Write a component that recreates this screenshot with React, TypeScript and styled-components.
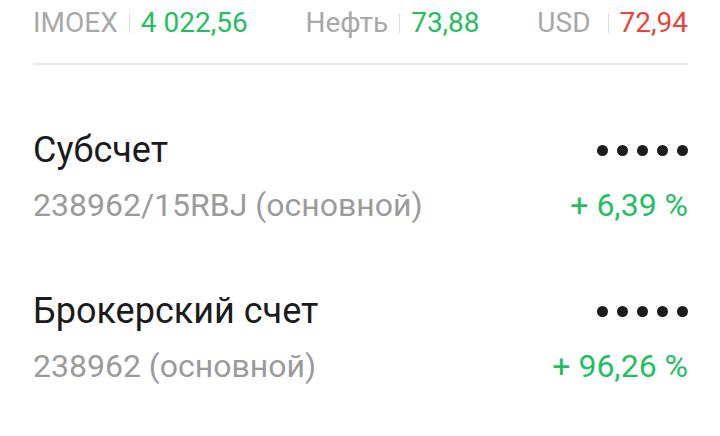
import React from "react";
import styled, { createGlobalStyle } from "styled-components";

const Global = createGlobalStyle`
  html, body { margin: 0; padding: 0; background: #ffffff; }
  body { font-family: Roboto, "Noto Sans", Arial, sans-serif; }
`;

const Page = styled.div`
  width: 720px;
  height: 436px;
  box-sizing: border-box;
  padding: 0 32px 0 33px;
  background: #fff;
  overflow: hidden;
`;

const Ticker = styled.div`
  display: flex;
  justify-content: space-between;
  align-items: baseline;
  height: 65px;
  box-sizing: border-box;
  padding-top: 5px;
  border-bottom: 2px solid #e8e8e8;
  font-size: 28px;
  line-height: 36px;
`;

const Quote = styled.div`
  display: flex;
  align-items: baseline;
  white-space: nowrap;
`;

const Label = styled.span`
  color: #a8a8a8;
`;

const Sep = styled.span<{ $wide?: boolean }>`
  display: inline-block;
  width: 1px;
  height: 20px;
  background: #dcdcdc;
  margin: 0 11px 0 ${(p) => (p.$wide ? "17px" : "11px")};
  align-self: center;
`;

const Value = styled.span<{ $down?: boolean }>`
  color: ${(p) => (p.$down ? "#e9443a" : "#1fbf62")};
`;

const Accounts = styled.div`
  display: flex;
  flex-direction: column;
  gap: 66px;
  padding-top: 64px;
`;

const Account = styled.div`
  display: grid;
  grid-template-columns: 1fr auto;
  row-gap: 15px;
  align-items: center;
`;

const Title = styled.div`
  font-size: 36px;
  line-height: 42px;
  color: #1b1b1b;
`;

const Sub = styled.div`
  font-size: 32px;
  line-height: 38px;
  color: #9b9b9b;
`;

const Change = styled.div`
  font-size: 32px;
  line-height: 38px;
  color: #1fbf62;
  justify-self: end;
`;

const Dots = styled.div`
  display: flex;
  gap: 9px;
  justify-self: end;
`;

const Dot = styled.span`
  width: 11px;
  height: 11px;
  border-radius: 50%;
  background: #1c1c1c;
`;

const quotes = [
  { label: "IMOEX", value: "4 022,56", down: false, wide: false },
  { label: "Нефть", value: "73,88", down: false, wide: false },
  { label: "USD", value: "72,94", down: true, wide: true },
];

const accounts = [
  { title: "Субсчет", sub: "238962/15RBJ (основной)", change: "+ 6,39 %" },
  { title: "Брокерский счет", sub: "238962 (основной)", change: "+ 96,26 %" },
];

export default function App() {
  return (
    <Page>
      <Global />
      <Ticker>
        {quotes.map((q) => (
          <Quote key={q.label}>
            <Label>{q.label}</Label>
            <Sep $wide={q.wide} />
            <Value $down={q.down}>{q.value}</Value>
          </Quote>
        ))}
      </Ticker>
      <Accounts>
        {accounts.map((a) => (
          <Account key={a.title}>
            <Title>{a.title}</Title>
            <Dots>
              {[0, 1, 2, 3, 4].map((i) => (
                <Dot key={i} />
              ))}
            </Dots>
            <Sub>{a.sub}</Sub>
            <Change>{a.change}</Change>
          </Account>
        ))}
      </Accounts>
    </Page>
  );
}
